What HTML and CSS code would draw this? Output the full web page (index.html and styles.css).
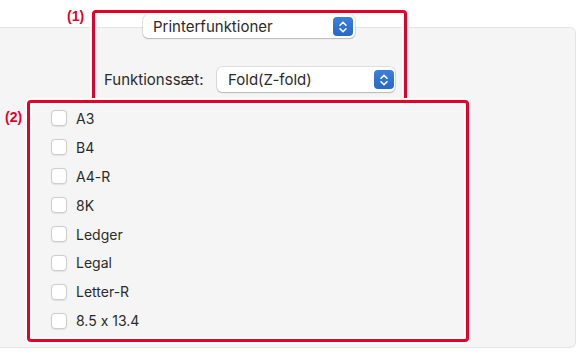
FILE: index.html
```html
<!DOCTYPE html>
<html lang="da">
<head>
    <meta charset="UTF-8">
    <title>Printerfunktioner</title>
    <link rel="stylesheet" href="styles.css">
</head>
<body>
    <div class="sheet">
        <div class="panel">
            <!-- øverste popup -->
            <div class="popup popup-top">
                <span class="popup-text">Printerfunktioner</span>
                <span class="stepper">
                    <svg width="10" height="14" viewBox="0 0 10 14"><path d="M2 5.2 L5 2.2 L8 5.2 M2 8.8 L5 11.8 L8 8.8" fill="none" stroke="#fff" stroke-width="1.6" stroke-linecap="round" stroke-linejoin="round"/></svg>
                </span>
            </div>

            <div class="func-row">
                <span class="func-label">Funktionssæt:</span>
                <div class="popup popup-func">
                    <span class="popup-text">Fold(Z-fold)</span>
                    <span class="stepper">
                        <svg width="10" height="14" viewBox="0 0 10 14"><path d="M2 5.2 L5 2.2 L8 5.2 M2 8.8 L5 11.8 L8 8.8" fill="none" stroke="#fff" stroke-width="1.6" stroke-linecap="round" stroke-linejoin="round"/></svg>
                    </span>
                </div>
            </div>

            <!-- papirformater -->
            <ul class="size-list">
                <li><span class="check"></span>A3</li>
                <li><span class="check"></span>B4</li>
                <li><span class="check"></span>A4-R</li>
                <li><span class="check"></span>8K</li>
                <li><span class="check"></span>Ledger</li>
                <li><span class="check"></span>Legal</li>
                <li><span class="check"></span>Letter-R</li>
                <li><span class="check"></span>8.5 x 13.4</li>
            </ul>
        </div>

        <!-- markeringer -->
        <div class="mark mark-1"></div>
        <div class="mark mark-2"></div>
        <span class="mark-label label-1">(1)</span>
        <span class="mark-label label-2">(2)</span>
    </div>
</body>
</html>
```

FILE: styles.css
```css
body {
    margin: 0;
    background-color: #fff;
    font-family: Inter, "Noto Sans", sans-serif;
    font-feature-settings: "calt" 0;
    color: #2b2b2b;
}
.sheet {
    position: relative;
    width: 581px;
    height: 359px;
    padding-top: 27px;
    box-sizing: border-box;
}
.panel {
    width: 576px;
    height: 321px;
    box-sizing: border-box;
    background-color: #f5f5f5;
    border: 1px solid #e4e4e4;
    border-left: none;
    border-radius: 0 6px 6px 0;
}
.popup {
    display: flex;
    align-items: center;
    justify-content: space-between;
    background-color: #fff;
    border-radius: 5px;
    box-shadow: 0 0 0 0.5px rgba(0, 0, 0, 0.18), 0 1px 1.5px rgba(0, 0, 0, 0.18);
    font-size: 15px;
    box-sizing: border-box;
}
.popup-top {
    width: 212px;
    height: 23px;
    margin: -13px 0 0 143px;
    padding: 0 2px 0 10px;
}
.popup-func {
    width: 178px;
    height: 25px;
    padding: 0 1px 0 11px;
}
.stepper {
    width: 20px;
    height: 19px;
    border-radius: 4px;
    background: linear-gradient(#3b7fdc, #2a68c6);
    display: flex;
    align-items: center;
    justify-content: center;
}
.func-row {
    display: flex;
    align-items: center;
    margin: 29px 0 0 104px;
    font-size: 15px;
}
.func-label {
    width: 113px;
}
.size-list {
    list-style: none;
    margin: 12px 0 0 0;
    padding: 0 0 0 51px;
}
.size-list li {
    display: flex;
    align-items: center;
    height: 28.9px;
    font-size: 14px;
}
.check {
    width: 14px;
    height: 14px;
    margin-right: 9px;
    background-color: #fff;
    border: 1px solid #cdcdcd;
    border-radius: 4px;
    box-shadow: 0 0.5px 1px rgba(0, 0, 0, 0.08);
}
.mark {
    position: absolute;
    border: 3px solid #e4002b;
    border-radius: 4px;
    box-sizing: border-box;
    box-shadow: 0 0 0 2px #fff, inset 0 0 0 2px #fff;
}
.mark-1 {
    left: 92px;
    top: 10px;
    width: 315px;
    height: 90px;
    border-bottom: none;
    border-radius: 4px 4px 0 0;
}
.mark-2 {
    left: 27px;
    top: 100px;
    width: 442px;
    height: 242px;
}
.mark-label {
    position: absolute;
    font-family: "Liberation Sans", Arial, sans-serif;
    font-weight: bold;
    font-size: 14px;
    color: #e4002b;
}
.label-1 {
    left: 67px;
    top: 8px;
}
.label-2 {
    left: 5px;
    top: 109px;
}
```
